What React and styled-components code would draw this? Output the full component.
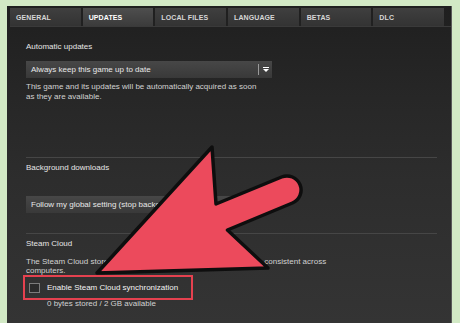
import React from "react";
import styled, { createGlobalStyle } from "styled-components";

const GlobalStyle = createGlobalStyle`
  html, body {
    margin: 0;
    padding: 0;
    background: #d2e9c5;
  }
  body {
    font-family: "Liberation Sans", Arial, sans-serif;
  }
`;

const Page = styled.div`
  position: relative;
  width: 460px;
  height: 323px;
  overflow: hidden;
  background: #d2e9c5;
  padding: 6px 8px 0 7px;
  box-sizing: border-box;
`;

const Window = styled.div`
  height: 100%;
  background: linear-gradient(#1f1f1f 0%, #262626 25%, #2d2d2d 55%, #343434 100%);
  border-right: 1px solid #5a5a5a;
  padding: 2px 7px 0 3px;
  box-sizing: border-box;
`;

const TabBar = styled.div`
  display: flex;
  gap: 2px;
  height: 18px;
  border-bottom: 1px solid #3a3a3a;
  margin-right: -7px;
  padding-right: 7px;
`;

const Tab = styled.div`
  flex: 1;
  display: flex;
  align-items: center;
  padding-left: 6px;
  font-size: 7px;
  font-weight: 700;
  letter-spacing: 0.1px;
  color: ${(p) => (p.$active ? "#ffffff" : "#d6d6d6")};
  background: ${(p) =>
    p.$active
      ? "linear-gradient(#4e4e4e, #3b3b3b)"
      : "linear-gradient(#3f3f3f, #333333)"};
`;

const Content = styled.div`
  padding-left: 16px;
`;

const Label = styled.div`
  margin-top: ${(p) => p.$mt}px;
  font-size: 8px;
  line-height: 10px;
  color: #e6e6e6;
`;

const Desc = styled.div`
  margin-top: ${(p) => p.$mt}px;
  font-size: 8px;
  line-height: ${(p) => p.$lh || 10}px;
  color: #d2d2d2;
  white-space: nowrap;
`;

const Dropdown = styled.div`
  margin-top: ${(p) => p.$mt}px;
  width: 246px;
  height: 17px;
  display: flex;
  align-items: center;
  background: linear-gradient(#474747, #393939);
  box-sizing: border-box;
  padding-left: 5px;
`;

const DropText = styled.div`
  flex: 1;
  white-space: nowrap;
  font-size: 8px;
  color: #e8e8e8;
`;

const DropDivider = styled.div`
  width: 1px;
  height: 11px;
  background: #9a9a9a;
`;

const DropArrow = styled.div`
  width: 13px;
  display: flex;
  justify-content: center;
  align-items: center;
`;

const Separator = styled.div`
  margin-top: ${(p) => p.$mt}px;
  margin-right: 7px;
  height: 1px;
  background: #464646;
`;

const CheckRow = styled.div`
  margin-top: ${(p) => p.$mt}px;
  margin-left: -3px;
  width: 170px;
  height: 25px;
  box-sizing: border-box;
  border: 2px solid ${(p) => (p.$highlight ? "#e5414f" : "transparent")};
  display: flex;
  align-items: center;
  gap: 7px;
  padding-left: 4px;
`;

const CheckBox = styled.div`
  width: 11px;
  height: 10px;
  box-sizing: border-box;
  border: 1px solid #7c7c7c;
  background: #2b2b2b;
`;

const CheckLabel = styled.div`
  font-size: 8px;
  color: #f2f2f2;
  white-space: nowrap;
`;

const SubNote = styled.div`
  margin-top: ${(p) => p.$mt}px;
  margin-left: 21px;
  font-size: 8px;
  line-height: 10px;
  color: #d2d2d2;
`;

const Overlay = styled.svg`
  position: absolute;
  top: 0;
  left: 0;
  pointer-events: none;
`;

const tabs = ["General", "Updates", "Local Files", "Language", "Betas", "DLC"];

function Caret() {
  return (
    <svg width="6" height="5" viewBox="0 0 6 5">
      <rect x="0" y="0" width="6" height="1" fill="#ffffff" />
      <path d="M0 2 L6 2 L3 5 Z" fill="#ffffff" />
    </svg>
  );
}

export default function App() {
  return (
    <Page>
      <GlobalStyle />
      <Window>
        <TabBar>
          {tabs.map((t) => (
            <Tab key={t} $active={t === "Updates"}>
              {t.toUpperCase()}
            </Tab>
          ))}
        </TabBar>
        <Content>
          <Label $mt={15}>Automatic updates</Label>
          <Dropdown $mt={9}>
            <DropText>Always keep this game up to date</DropText>
            <DropDivider />
            <DropArrow>
              <Caret />
            </DropArrow>
          </Dropdown>
          <Desc $mt={4}>
            This game and its updates will be automatically acquired as soon
            <br />
            as they are available.
          </Desc>
          <Separator $mt={55} />
          <Label $mt={5}>Background downloads</Label>
          <Dropdown $mt={23}>
            <DropText>Follow my global setting (stop background downloads)</DropText>
            <DropDivider />
            <DropArrow>
              <Caret />
            </DropArrow>
          </Dropdown>
          <Separator $mt={20} />
          <Label $mt={5}>Steam Cloud</Label>
          <Desc $mt={8} $lh={9}>
            The Steam Cloud stores your game saves and data so that it stays consistent across
            <br />
            computers.
          </Desc>
          <CheckRow $mt={0} $highlight>
            <CheckBox />
            <CheckLabel>Enable Steam Cloud synchronization</CheckLabel>
          </CheckRow>
          <SubNote $mt={-1}>0 bytes stored / 2 GB available</SubNote>
        </Content>
      </Window>
      <Overlay width="460" height="323" viewBox="0 0 460 323">
        <path
          d="M97 273 L212 147 L216 204 L281.6 177 A14 14 0 0 1 292.4 203 L227.4 230 L268 268 Z"
          fill="#ec4a5c"
          stroke="#0e0e0e"
          strokeWidth="3.5"
          strokeLinejoin="round"
        />
      </Overlay>
    </Page>
  );
}
